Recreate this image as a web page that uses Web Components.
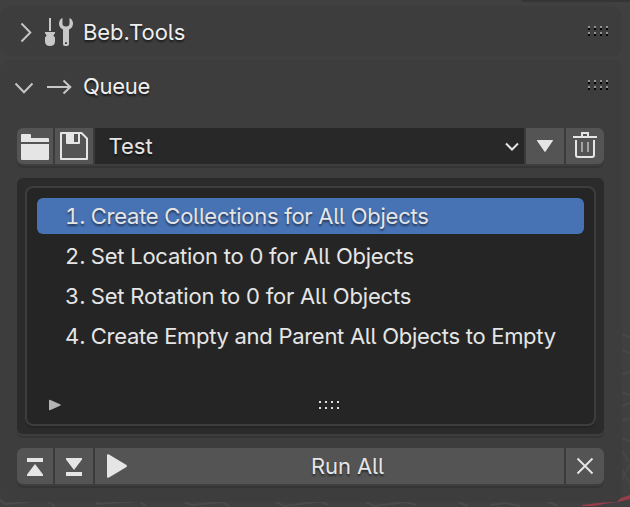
<!DOCTYPE html>
<html lang="en">
<head>
<meta charset="utf-8">
<title>Beb.Tools</title>
<style>
html,body{margin:0;height:100%;overflow:hidden;background:#404040}
body{font-family:Inter,"Liberation Sans",sans-serif;font-size:22px;color:#e5e5e5}
</style>
</head>
<body>
<tools-sidebar></tools-sidebar>
<script>
const icons={
right:'<svg width="38" height="36" viewBox="0 0 38 36"><path d="M9.500 9.500L18.300 18.500L9.500 27.500" fill="none" stroke="#c4c4c4" stroke-width="2"/></svg>',
down:'<svg width="38" height="36" viewBox="0 0 38 36"><path d="M3.500 14.500L12 23.300L20.500 14.500" fill="none" stroke="#c4c4c4" stroke-width="2"/></svg>',
tools:'<svg width="30" height="30" viewBox="0 0 30 30"><path fill="#c8c8c8" d="M4 1h2v13H4zM0 15h10v1.200l-1.700 2.300L10 20.500v4c0 3-2.200 4.500-5 4.500s-5-1.500-5-4.500v-4l1.700-2L0 16.200z"/><path fill="#c8c8c8" fill-rule="evenodd" d="M17.500 1v5.500c0 2 1.200 3 3.500 3s3.500-1 3.500-3V1C26.500 1.500 28 4 28 6.500c0 3-1.500 5-4 6V27c0 1.300-.8 2-2 2h-2c-1.200 0-2-.7-2-2V12.500c-2.500-1-4-3-4-6C14 4 15.500 1.500 17.500 1zM20 25.200v1.900h2v-1.900z"/></svg>',
arrow:'<svg width="30" height="30" viewBox="0 0 30 30"><path d="M2 15H25.500M18.500 8.500L25.300 15L18.500 21.500" fill="none" stroke="#c8c8c8" stroke-width="2"/></svg>',
folder:'<svg width="36" height="36" viewBox="0 0 36 36"><path fill="#e5e5e5" d="M4 14V7q0-1 1-1h8q1 0 1 1v3h17q1 0 1 1v3zM4 16h28v15q0 1-1 1H5q-1 0-1-1z"/></svg>',
save:'<svg width="38" height="36" viewBox="0 0 38 36"><path fill="none" stroke="#e5e5e5" stroke-width="2" stroke-linejoin="round" d="M6 5H26.500L32 10.500V31H6z"/><path fill="#e5e5e5" fill-rule="evenodd" d="M11 4h14v11q0 1-1 1H12q-1 0-1-1zM19 6v8h4V6z"/></svg>',
chev:'<svg width="14" height="10" viewBox="0 0 14 10"><path d="M1 1.500L7 7.500L13 1.500" fill="none" stroke="#e5e5e5" stroke-width="2"/></svg>',
tri:'<svg width="38" height="36" viewBox="0 0 38 36"><path fill="#e5e5e5" d="M11.500 12h15q1 0 .4 .8L19.600 23.500q-.6.800-1.200 0L11 12.800q-.5-.8.500-.8z"/></svg>',
trash:'<svg width="38" height="36" viewBox="0 0 38 36"><path fill="none" stroke="#e5e5e5" stroke-width="2" d="M7 9H31M16 9V5H22V9M10 12V27Q10 29 12 29H26Q28 29 28 27V12"/><path stroke="#a2a2a2" stroke-width="2" d="M16 14V24M22 14V24"/></svg>',
top:'<svg width="36" height="36" viewBox="0 0 36 36"><path fill="#e5e5e5" d="M10 10h16v4H10zM18 16L26 26.500V28H10v-1.500z"/></svg>',
bottom:'<svg width="38" height="36" viewBox="0 0 38 36"><path fill="#e5e5e5" d="M11 24h16v4H11zM19 22L11 11.500V10h16v1.500z"/></svg>',
play:'<svg width="22" height="26" viewBox="0 0 22 26"><path fill="#e5e5e5" d="M1 2q0-1 2-.5L20.500 12q1 1 0 2L3 24.500q-2 .5-2-.5z"/></svg>',
close:'<svg width="38" height="36" viewBox="0 0 38 36"><path d="M11.500 10.500L26.500 25.500M26.500 10.500L11.500 25.500" stroke="#e5e5e5" stroke-width="1.900"/></svg>',
small:'<svg width="12" height="12" viewBox="0 0 12 12"><path fill="#b4b4b4" d="M0 1.500q0-1 1.500-.5L11.500 5.500q.5.500 0 1L1.500 11Q0 11.500 0 10.500z"/></svg>'
};
function dots(light,shade){let s='';for(let r=0;r<2;r++)for(let c=0;c<4;c++){s+=`<path fill="${light}" d="M${c*6} ${r*6}h2v2h-2z"/>`;if(shade)s+=`<path fill="${shade}" d="M${c*6} ${r*6+2}h2v2h-2z"/>`}return `<svg width="20" height="10" viewBox="0 0 20 10">${s}</svg>`}
icons.grip=dots('#939393','#050505');
icons.gripLight=dots('#e0e0e0','');

class Base extends HTMLElement{
  constructor(){super();this.attachShadow({mode:'open'})}
  connectedCallback(){this.shadowRoot.innerHTML=`<style>svg{display:block}*{box-sizing:border-box}${this.css()}</style>${this.html()}`}
  css(){return ''} html(){return '<slot></slot>'}
}
customElements.define('b-icon',class extends Base{
  css(){return ':host{display:block;flex:none}'}
  html(){return icons[this.getAttribute('name')]}
});
customElements.define('panel-header',class extends Base{
  css(){return `:host{display:flex;align-items:center;height:54px;padding:2px 14px 0 12px;color:#efefef;text-shadow:0 2px 2px rgba(0,0,0,.6)}
  .lead{width:33px}.label{margin-left:8px;flex:1}.grip{margin-bottom:2px}
  :host([state=down]){padding-top:0}:host([state=down]) .label{margin-bottom:2px}:host([state=down]) .grip{margin-bottom:4px}`}
  html(){return `<b-icon class="lead" name="${this.getAttribute('state')}"></b-icon><b-icon name="${this.getAttribute('icon')}"></b-icon><span class="label"><slot></slot></span><b-icon class="grip" name="grip"></b-icon>`}
});
customElements.define('button-row',class extends Base{
  css(){return `:host{display:flex;gap:2px;height:36px;border-radius:6px;background:#3b3b3b;box-shadow:0 2px #3e3e3e,0 4px #353535}
  ::slotted(:first-child){border-radius:6px 0 0 6px}::slotted(:last-child){border-radius:0 6px 6px 0}`}
});
customElements.define('tool-button',class extends Base{
  css(){return `:host{display:flex;align-items:center;height:36px;background:#545454;flex:none}:host([wide]){flex:1}
  .play{margin-left:11px}.label{flex:1;text-align:center;padding-left:3px;letter-spacing:-.1px;text-shadow:0 2px 2px rgba(0,0,0,.5)}`}
  html(){const w=this.hasAttribute('wide');return `<b-icon class="${w?'play':''}" name="${this.getAttribute('icon')}"></b-icon>${w?'<span class="label"><slot></slot></span>':''}`}
});
customElements.define('preset-field',class extends Base{
  css(){return `:host{display:flex;align-items:center;flex:1;height:36px;background:#282828;padding:0 5px 0 13.500px;text-shadow:0 2px 2px rgba(0,0,0,.5)}span{flex:1}b-icon{margin-top:2px}`}
  html(){return '<span><slot></slot></span><b-icon name="chev"></b-icon>'}
});
customElements.define('queue-list',class extends Base{
  css(){return `:host{display:block;height:256px;padding:8px;border-radius:6px;background:#2b2b2b;box-shadow:0 2px #3d3d3d,0 4px #353535}
  .in{display:flex;flex-direction:column;gap:4px;height:240px;border:2px solid #3d3d3d;border-radius:8px;background:#252525;box-shadow:0 2px #242424;padding:10px}
  .foot{display:flex;justify-content:space-between;align-items:center;margin-top:auto;padding:0 245px 3px 12px}.foot .g{margin-top:2px}`}
  html(){return '<div class="in"><slot></slot><div class="foot"><b-icon name="small"></b-icon><b-icon class="g" name="gripLight"></b-icon></div></div>'}
});
customElements.define('queue-item',class extends Base{
  css(){return `:host{display:flex;align-items:center;height:36px;padding-left:28px;border-radius:6px;white-space:pre}
  .n{font-variant-numeric:tabular-nums}.t{margin-left:-1px;letter-spacing:var(--track,0)}
  :host([selected]){background:#4772b3;text-shadow:0 2px 2px rgba(0,0,0,.5)}`}
  html(){return `<span class="n">${this.getAttribute('number')}</span><span>. </span><span class="t"><slot></slot></span>`}
});
customElements.define('tools-sidebar',class extends Base{
  css(){return `:host{display:block;width:630px;height:507px;background:#404040;position:relative;overflow:hidden;font-feature-settings:"cv05"}
  .panel{background:#3d3d3d;width:622px;border-radius:10px}
  .first{height:50px;margin-top:6px;display:flex;align-items:center}.first panel-header{width:100%;letter-spacing:-.05px}
  .second{margin-top:4px;height:442px}.second panel-header{letter-spacing:-.3px}
  .body{padding:14px 18px 0 17px;display:flex;flex-direction:column;gap:14px}
  .scene{position:absolute;inset:0}
  main{padding-top:.1px;position:relative}`}
  html(){return `<svg class="scene" width="630" height="507"><path fill="#353535" d="M521 0H630V2H524Q522 2 521 0z"/><path fill="none" stroke="#4a4a4a" stroke-width="2" d="M0 500L5 504L28 502M48 502l7 4M96 504l30-2 6 0M96 502l4 2M140 502l6 4M184 502l8 3 30-3 7 4M276 502l8 4 32-4q6-1 12 3M366 502l8 4 32-4 10 3M458 502l10 4M490 505l16-2 14 3M548 502l10 4"/><path fill="none" stroke="#474747" stroke-width="2" d="M622 335l8 2M622 350l8 3M622 374l8-2M622 392l8 3M622 406l8-3M622 420l8-1M622 439l8 2M622 451l7 11M622 480l8-16M622 470l8 14"/><path fill="#983d49" d="M582 505Q602 502 617 502L621 498L630 495V499L618 502Q608 503 593 506H582z"/></svg>
  <main><section class="panel first"><panel-header state="right" icon="tools">Beb.Tools</panel-header></section>
  <section class="panel second"><panel-header state="down" icon="arrow">Queue</panel-header>
  <div class="body"><button-row><tool-button icon="folder"></tool-button><tool-button icon="save"></tool-button><preset-field>Test</preset-field><tool-button icon="tri"></tool-button><tool-button icon="trash"></tool-button></button-row>
  <queue-list><queue-item selected number="1" style="--track:-.26px">Create Collections for All Objects</queue-item><queue-item number="2" style="--track:-.23px">Set Location to 0 for All Objects</queue-item><queue-item number="3" style="--track:-.19px">Set Rotation to 0 for All Objects</queue-item><queue-item number="4" style="--track:-.29px">Create Empty and Parent All Objects to Empty</queue-item></queue-list>
  <button-row><tool-button icon="top"></tool-button><tool-button icon="bottom"></tool-button><tool-button wide icon="play">Run All</tool-button><tool-button icon="close"></tool-button></button-row></div></section></main>`}
});
</script>
</body>
</html>
